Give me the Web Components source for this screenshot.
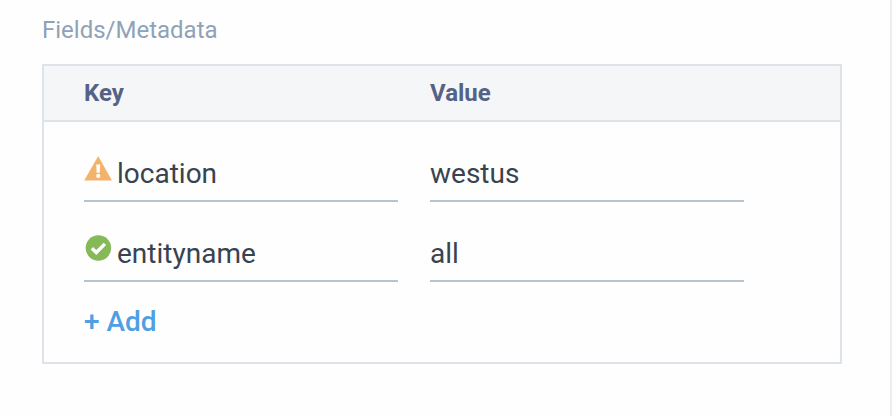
<!DOCTYPE html>
<html lang="en">
<head>
<meta charset="utf-8">
<title>Fields/Metadata</title>
<style>
  html, body { height: 100%; }
  body { margin: 0; background: #fefefe; font-family: Roboto, "Liberation Sans", sans-serif; }
</style>
</head>
<body>
<side-panel>
  <metadata-section heading="Fields/Metadata">
    <metadata-table></metadata-table>
  </metadata-section>
</side-panel>

<template id="side-panel">
  <style>
    :host { display: block; box-sizing: border-box; min-height: 100%; margin-right: 4px; padding: 14px 48px 48px 42px; border-right: 2px solid #e9eef2; }
  </style>
  <slot></slot>
</template>

<template id="metadata-section">
  <style>
    :host { display: block; }
    h2 { margin: 0 0 18px; font-size: 24px; line-height: 32px; font-weight: 400; color: #8fa2b8; }
  </style>
  <h2></h2>
  <slot></slot>
</template>

<template id="status-icon">
  <style>
    :host { display: block; width: 28px; height: 28px; flex: none; }
    svg { display: block; width: 28px; height: 28px; }
    .ok, .warning { display: none; }
    :host([kind="ok"]) .ok, :host([kind="warning"]) .warning { display: block; }
  </style>
  <svg class="warning" viewBox="0 0 28 28" role="img" aria-label="Warning">
    <path fill="#f4b36b" d="M14.2 2 28 26.6H.2Z"/>
    <path fill="#fff" d="M12.2 10.4h4l-.5 8.4h-3Z"/>
    <circle cx="14.2" cy="21.9" r="2.1" fill="#fff"/>
  </svg>
  <svg class="ok" viewBox="0 0 28 28" role="img" aria-label="Valid">
    <circle cx="14.4" cy="14" r="12.8" fill="#86b958"/>
    <path fill="none" stroke="#fff" stroke-width="3.4" d="m7.9 14.2 4.4 4.3 8.6-8.6"/>
  </svg>
</template>

<template id="text-field">
  <style>
    :host { display: flex; align-items: flex-start; gap: 5px; box-sizing: border-box; height: 60px; border-bottom: 2px solid #b8c3d0; }
    ::slotted(status-icon) { margin-top: 12px; }
    input { flex: 1; min-width: 0; width: 100%; height: 60px; box-sizing: border-box; margin: 0; padding: 2px 0 0; border: 0; outline: 0; background: none; color: #39434f; font: 400 28px/36px Roboto, "Liberation Sans", sans-serif; }
  </style>
  <slot name="icon"></slot>
  <input type="text">
</template>

<template id="metadata-table">
  <style>
    :host { display: block; border: 2px solid #dde3e8; }
    table { width: 100%; border-collapse: collapse; table-layout: fixed; }
    .pad { width: 40px; }
    .gap { width: 32px; }
    .end { width: 96px; }
    th, td { padding: 0; text-align: left; }
    thead { background: #f5f6f8; }
    th { height: 54px; font-size: 24px; line-height: 28px; font-weight: 700; color: #566285; }
    thead tr { border-bottom: 2px solid #dde3e8; }
    td { padding-top: 20px; }
    .actions { padding: 20px 40px 20px; }
    button { display: block; margin: 0; padding: 0; border: 0; background: none; color: #509fe3; font: 500 28px/40px Roboto, "Liberation Sans", sans-serif; cursor: pointer; }
  </style>
  <table>
    <colgroup><col class="pad"><col><col class="gap"><col><col class="end"></colgroup>
    <thead><tr><td></td><th scope="col">Key</th><td></td><th scope="col">Value</th><td></td></tr></thead>
    <tbody>
      <tr><td></td><td><text-field label="Key 1" value="location"><status-icon slot="icon" kind="warning"></status-icon></text-field></td><td></td><td><text-field label="Value 1" value="westus"></text-field></td><td></td></tr>
      <tr><td></td><td><text-field label="Key 2" value="entityname"><status-icon slot="icon" kind="ok"></status-icon></text-field></td><td></td><td><text-field label="Value 2" value="all"></text-field></td><td></td></tr>
    </tbody>
  </table>
  <div class="actions"><button type="button">+ Add</button></div>
</template>

<script>
  class TemplateElement extends HTMLElement {
    constructor() {
      super();
      const template = document.getElementById(this.localName);
      this.attachShadow({ mode: "open" }).append(template.content.cloneNode(true));
    }
  }
  customElements.define("side-panel", class extends TemplateElement {});
  customElements.define("status-icon", class extends TemplateElement {});
  customElements.define("metadata-section", class extends TemplateElement {
    connectedCallback() {
      this.shadowRoot.querySelector("h2").textContent = this.getAttribute("heading");
    }
  });
  customElements.define("text-field", class extends TemplateElement {
    connectedCallback() {
      const input = this.shadowRoot.querySelector("input");
      input.value = this.getAttribute("value");
      input.setAttribute("aria-label", this.getAttribute("label"));
    }
  });
  customElements.define("metadata-table", class extends TemplateElement {});
</script>
</body>
</html>
